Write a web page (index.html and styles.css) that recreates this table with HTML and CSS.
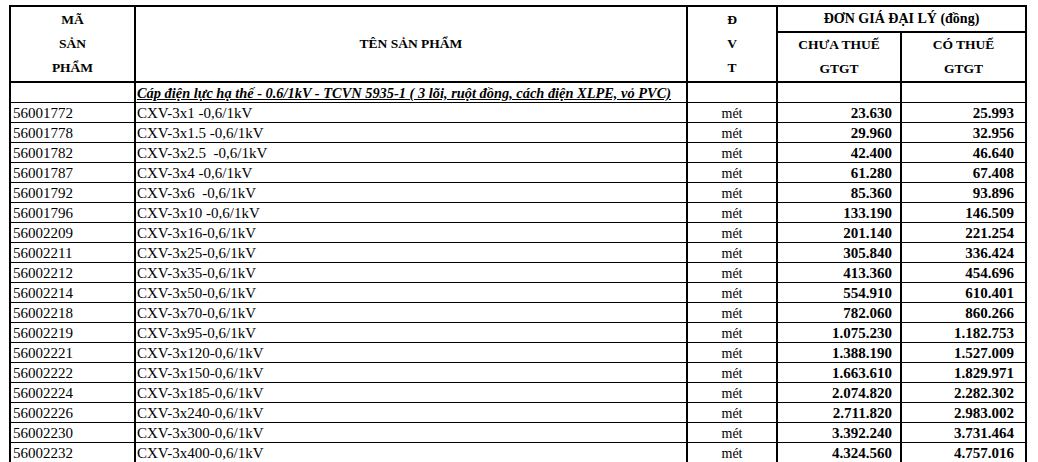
FILE: index.html
```html
<!DOCTYPE html>
<html lang="vi">
<head>
<meta charset="utf-8">
<title>Bảng giá cáp điện</title>
<link rel="stylesheet" href="styles.css">
</head>
<body>
<table class="price">
  <colgroup>
    <col class="c-code">
    <col class="c-name">
    <col class="c-unit">
    <col class="c-p1">
    <col class="c-p2">
  </colgroup>
  <thead>
    <tr class="h1">
      <th rowspan="2" class="stack">MÃ<br>SẢN<br>PHẨM</th>
      <th rowspan="2">TÊN SẢN PHẨM</th>
      <th rowspan="2" class="stack">Đ<br>V<br>T</th>
      <th colspan="2" class="group">ĐƠN GIÁ ĐẠI LÝ (đồng)</th>
    </tr>
    <tr class="h2">
      <th class="stack">CHƯA THUẾ<br>GTGT</th>
      <th class="stack">CÓ THUẾ<br>GTGT</th>
    </tr>
  </thead>
  <tbody>
    <tr class="section">
      <td></td>
      <td class="sec-title">Cáp điện lực hạ thế - 0.6/1kV - TCVN 5935-1 ( 3 lõi, ruột đồng, cách điện XLPE, vỏ PVC)</td>
      <td></td><td></td><td></td>
    </tr>
    <tr><td class="code">56001772</td><td class="name">CXV-3x1 -0,6/1kV</td><td class="unit">mét</td><td class="num n1">23.630</td><td class="num n2">25.993</td></tr>
    <tr><td class="code">56001778</td><td class="name">CXV-3x1.5 -0,6/1kV</td><td class="unit">mét</td><td class="num n1">29.960</td><td class="num n2">32.956</td></tr>
    <tr><td class="code">56001782</td><td class="name">CXV-3x2.5&nbsp; -0,6/1kV</td><td class="unit">mét</td><td class="num n1">42.400</td><td class="num n2">46.640</td></tr>
    <tr><td class="code">56001787</td><td class="name">CXV-3x4 -0,6/1kV</td><td class="unit">mét</td><td class="num n1">61.280</td><td class="num n2">67.408</td></tr>
    <tr><td class="code">56001792</td><td class="name">CXV-3x6&nbsp; -0,6/1kV</td><td class="unit">mét</td><td class="num n1">85.360</td><td class="num n2">93.896</td></tr>
    <tr><td class="code">56001796</td><td class="name">CXV-3x10 -0,6/1kV</td><td class="unit">mét</td><td class="num n1">133.190</td><td class="num n2">146.509</td></tr>
    <tr><td class="code">56002209</td><td class="name">CXV-3x16-0,6/1kV</td><td class="unit">mét</td><td class="num n1">201.140</td><td class="num n2">221.254</td></tr>
    <tr><td class="code">56002211</td><td class="name">CXV-3x25-0,6/1kV</td><td class="unit">mét</td><td class="num n1">305.840</td><td class="num n2">336.424</td></tr>
    <tr><td class="code">56002212</td><td class="name">CXV-3x35-0,6/1kV</td><td class="unit">mét</td><td class="num n1">413.360</td><td class="num n2">454.696</td></tr>
    <tr><td class="code">56002214</td><td class="name">CXV-3x50-0,6/1kV</td><td class="unit">mét</td><td class="num n1">554.910</td><td class="num n2">610.401</td></tr>
    <tr><td class="code">56002218</td><td class="name">CXV-3x70-0,6/1kV</td><td class="unit">mét</td><td class="num n1">782.060</td><td class="num n2">860.266</td></tr>
    <tr><td class="code">56002219</td><td class="name">CXV-3x95-0,6/1kV</td><td class="unit">mét</td><td class="num n1">1.075.230</td><td class="num n2">1.182.753</td></tr>
    <tr><td class="code">56002221</td><td class="name">CXV-3x120-0,6/1kV</td><td class="unit">mét</td><td class="num n1">1.388.190</td><td class="num n2">1.527.009</td></tr>
    <tr><td class="code">56002222</td><td class="name">CXV-3x150-0,6/1kV</td><td class="unit">mét</td><td class="num n1">1.663.610</td><td class="num n2">1.829.971</td></tr>
    <tr><td class="code">56002224</td><td class="name">CXV-3x185-0,6/1kV</td><td class="unit">mét</td><td class="num n1">2.074.820</td><td class="num n2">2.282.302</td></tr>
    <tr><td class="code">56002226</td><td class="name">CXV-3x240-0,6/1kV</td><td class="unit">mét</td><td class="num n1">2.711.820</td><td class="num n2">2.983.002</td></tr>
    <tr><td class="code">56002230</td><td class="name">CXV-3x300-0,6/1kV</td><td class="unit">mét</td><td class="num n1">3.392.240</td><td class="num n2">3.731.464</td></tr>
    <tr><td class="code">56002232</td><td class="name">CXV-3x400-0,6/1kV</td><td class="unit">mét</td><td class="num n1">4.324.560</td><td class="num n2">4.757.016</td></tr>
  </tbody>
</table>
</body>
</html>
```
FILE: styles.css
```css
html, body {
  margin: 0;
  padding: 0;
  background: #ffffff;
}

body {
  font-family: "Liberation Serif", "Times New Roman", serif;
  color: #000;
}

.price {
  border-collapse: collapse;
  table-layout: fixed;
  width: 1018px;
  margin: 5px 0 0 9px;
  border: 2px solid #000;
}

.c-code { width: 125px; }
.c-name { width: 552px; }
.c-unit { width: 90px; }
.c-p1 { width: 124px; }
.c-p2 { width: 125px; }

.price th {
  border: 2px solid #000;
  font-weight: bold;
  font-size: 13.5px;
  line-height: 24px;
  padding: 0;
  text-align: center;
  vertical-align: middle;
}

.price .group { font-size: 14px; }

.price .h1 th { height: 23px; }
.price .h2 th { height: 44px; }

.price td {
  border-left: 2px solid #000;
  border-right: 2px solid #000;
  border-top: 1px solid #000;
  border-bottom: 1px solid #000;
  padding: 0;
  height: 19px;
  font-size: 15px;
  line-height: 17px;
  vertical-align: bottom;
  white-space: nowrap;
  overflow: hidden;
}

.price .section td {
  border-top: 2px solid #000;
}

.price .sec-title {
  font-size: 14.4px;
  font-weight: bold;
  font-style: italic;
  text-decoration: underline;
  padding-left: 1px;
}

.price .code { padding-left: 2px; }
.price .name { padding-left: 1px; }

.price .unit {
  text-align: center;
  font-size: 14px;
}

.price .num {
  text-align: right;
  font-weight: bold;
  font-size: 15px;
}

.price .n1 { padding-right: 8px; }
.price .n2 { padding-right: 11px; }
```
